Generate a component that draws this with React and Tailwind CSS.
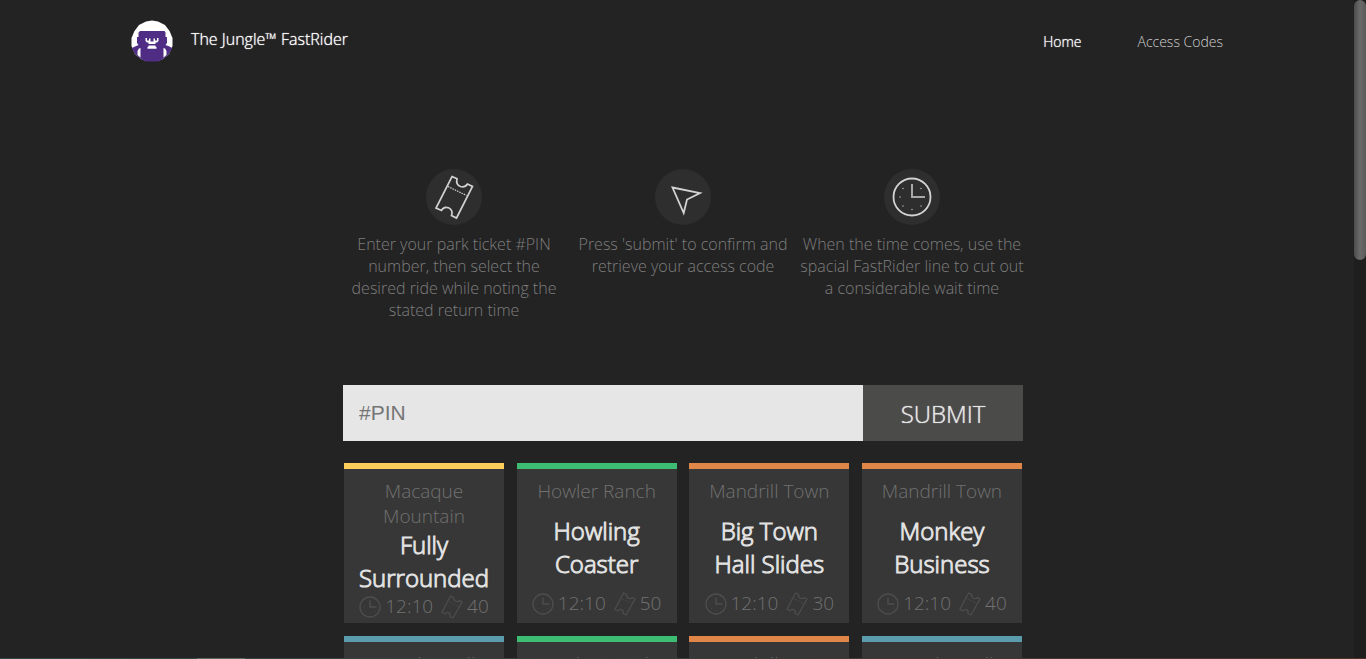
const STEPS = [
  {
    icon: StepTicket,
    text: 'Enter your park ticket #PIN number, then select the desired ride while noting the stated return time',
  },
  {
    icon: StepPointer,
    text: "Press 'submit' to confirm and retrieve your access code",
  },
  {
    icon: StepClock,
    text: 'When the time comes, use the spacial FastRider line to cut out a considerable wait time',
  },
];

const RIDES = [
  { area: 'Macaque Mountain', name: 'Fully Surrounded', time: '12:10', tickets: 40, accent: 'border-[#ffcf5b]' },
  { area: 'Howler Ranch', name: 'Howling Coaster', time: '12:10', tickets: 50, accent: 'border-[#3dbd73]' },
  { area: 'Mandrill Town', name: 'Big Town Hall Slides', time: '12:10', tickets: 30, accent: 'border-[#df8648]' },
  { area: 'Mandrill Town', name: 'Monkey Business', time: '12:10', tickets: 40, accent: 'border-[#df8648]' },
  { area: 'Capuchin Hills', name: 'Treetop Glide', time: '12:10', tickets: 20, accent: 'border-[#5a9cab]' },
  { area: 'Howler Ranch', name: 'Canopy Drop', time: '12:10', tickets: 30, accent: 'border-[#3dbd73]' },
  { area: 'Mandrill Town', name: 'River Rapids', time: '12:10', tickets: 40, accent: 'border-[#df8648]' },
  { area: 'Capuchin Hills', name: 'Vine Express', time: '12:10', tickets: 50, accent: 'border-[#5a9cab]' },
];

function Logo() {
  return (
    <svg viewBox="0 0 42 42" className="size-[42px]" aria-hidden="true">
      <path d="M15 1.500 L21 .5 L27 1.500 L34 5 L38.500 11 L41.500 18 V26 L38 34 L32 39 L27 41 H15 L10 39 L4 34 L.5 26 V18 L3.500 11 L8 5Z" fill="#fff" />
      <path d="M9 11 H33.500 L34.500 12.500 V17 H36 V23 L34.500 25 L38.500 26.500 L41 28 L38 34 L32 39 L27 41.500 H15 L10 39 L4 34 L1 28 L4 26.500 L7.500 25 L6 23 V17 H7.500 V12.500Z" fill="#4f2d85" />
      <path d="M14.500 18 H16 V20.500 H18 V18.500 H19.500 V21.500 H22.500 V18.500 H24 V20.500 H26 V18 H27.500 V21 L26 22.500 H24.500 V24 H17.500 V22.500 H16 L14.500 21Z M17.500 25.500 H24.500 V26.800 H25.500 V28.800 H16.500 V26.800 H17.500Z M8 28.500 L9.500 28 V37.500 L6.500 35 V31Z M34 28.500 L32.500 28 V37.500 L35.500 35 V31Z" fill="#fff" />
    </svg>
  );
}

function StepTicket() {
  return (
    <svg viewBox="0 0 56 56" className="size-14" fill="none" stroke="#d2d2d2" strokeWidth="1.700" aria-hidden="true">
      <path d="M26 7.500 L31 9.800 C30 14 31.500 16.500 34.500 17.500 C37.500 18.400 40 17.300 41.500 15 L46.500 17.500 L30.500 49 L25.500 46.600 C27 43 25.500 40 22.500 38.800 C19.500 37.800 16.700 39 15.500 41.500 L10 39Z" />
      <path d="M22 17.500 L40.500 26.500" strokeDasharray="1.500 1" strokeWidth="1.200" />
    </svg>
  );
}

function StepPointer() {
  return (
    <svg viewBox="0 0 56 56" className="size-14" fill="none" stroke="#d2d2d2" strokeWidth="1.800" aria-hidden="true">
      <path d="M17.500 18.500 L45 24 L32 30.500 L28.700 44Z" />
    </svg>
  );
}

function StepClock() {
  return (
    <svg viewBox="0 0 56 56" className="size-14" fill="none" stroke="#d2d2d2" aria-hidden="true">
      <circle cx="28" cy="28" r="18.500" strokeWidth="1.800" />
      <path d="M28 15 V28 H41" strokeWidth="2" stroke="#a8a8a8" />
      <g fill="#a8a8a8" stroke="none">
        <circle cx="19" cy="19.500" r=".8" />
        <circle cx="37" cy="19.500" r=".8" />
        <circle cx="16" cy="28" r=".8" />
        <circle cx="19" cy="37" r=".8" />
        <circle cx="28" cy="40.500" r=".8" />
        <circle cx="37" cy="37" r=".8" />
      </g>
    </svg>
  );
}

function SmallClock() {
  return (
    <svg viewBox="0 0 22 22" className="size-[22px]" fill="none" stroke="#4d4d4d" strokeWidth="1.400" aria-hidden="true">
      <circle cx="11" cy="11" r="10" />
      <path d="M11 4.500 V11 H17.500" />
      <path d="M4.500 11 h.8 M6 15.500 h.8 M11 17 v.8 M15.500 15.500 h.8" strokeWidth=".8" />
    </svg>
  );
}

function SmallTicket() {
  return (
    <svg viewBox="0 0 22 24" className="h-6 w-[22px]" fill="none" stroke="#4d4d4d" strokeWidth="1.300" aria-hidden="true">
      <path d="M9.500 1 L12.500 2.500 C12.500 5 13.500 6 15 6.500 C16.500 7 17.500 6.500 18.500 5.500 L21 7 L12 23 L9 21.500 C9.500 19.500 9 18.300 7.500 17.600 C6 17 5 17.500 4 19 L1 17.300Z" />
      <path d="M7.500 6.500 L17.500 11.500" strokeDasharray="1 1" strokeWidth=".9" />
    </svg>
  );
}

function RideCard({ ride }) {
  return (
    <li className={`flex h-40 w-40 flex-col justify-between border-t-6 bg-[#373737] px-2.5 pt-2.5 pb-[7px] text-center ${ride.accent}`}>
      <p className="shrink-0 text-[19px] leading-[25px] text-[#717171]">{ride.area}</p>
      <h2 className="-mt-px shrink-0 text-2xl leading-[33px] text-[#e2e2e2] [-webkit-text-stroke:1px_currentColor]">
        {ride.name}
      </h2>
      <div className="flex shrink-0 items-center justify-center gap-1 text-[19px] leading-[25px] text-[#717171]">
        <SmallClock />
        <span>{ride.time}</span>
        <span className="ml-1 flex items-center gap-1">
          <SmallTicket />
          {ride.tickets}
        </span>
      </div>
    </li>
  );
}

export default function App() {
  return (
    <div className="relative h-screen bg-[#232323] font-['Open_Sans',sans-serif] font-light">
      <div className="h-full overflow-y-auto pb-10 [scrollbar-width:none]">
        <header className="mx-auto flex max-w-[1104px] items-center justify-between pt-5">
          <a href="#home" className="flex items-center gap-[18px] text-base text-white">
            <Logo />
            <span className="pb-1 text-shadow-[0_0_1px_currentColor]">The Jungle™ FastRider</span>
          </a>
          <nav className="flex gap-14 pt-0.5 pr-3 text-sm">
            <a href="#home" className="text-white text-shadow-[0_0_1px_currentColor]">Home</a>
            <a href="#codes" className="text-[#d0d0d0]">Access Codes</a>
          </nav>
        </header>

        <main className="pt-[107px]">
          <ul className="mx-auto grid max-w-[687px] grid-cols-3">
            {STEPS.map(({ icon: Icon, text }) => (
              <li key={text} className="flex flex-col items-center">
                <span className="rounded-full bg-[#2e2e2e]">
                  <Icon />
                </span>
                <p className="mt-2 text-center text-base leading-[22px] text-[#7e7e7e]">{text}</p>
              </li>
            ))}
          </ul>

          <form className="mx-auto mt-16 flex h-14 max-w-[680px]" onSubmit={(e) => e.preventDefault()}>
            <input
              type="text"
              aria-label="#PIN"
              placeholder="#PIN"
              className="min-w-0 flex-1 bg-[#e6e6e6] px-4 font-['Liberation_Sans',sans-serif] text-[21px] font-normal text-[#333] outline-none placeholder:text-[#757575]"
            />
            <button type="submit" className="w-40 bg-[#4b4b49] pt-0.5 text-2xl text-[#e6e6e6] text-shadow-[0_0_1px_currentColor]">
              SUBMIT
            </button>
          </form>

          <ul className="mx-auto mt-[22px] flex max-w-[678px] flex-wrap justify-between gap-y-[13px]">
            {RIDES.map((ride, i) => (
              <RideCard key={i} ride={ride} />
            ))}
          </ul>
        </main>
      </div>

      <div className="absolute inset-y-0 right-0 w-3 bg-[#1e1e1e]" aria-hidden="true">
        <div className="h-[260px] rounded-md bg-linear-to-r from-[#4c4c4c] via-[#6a6a6a] to-[#5a5a5a]" />
      </div>
      <div
        className="absolute inset-x-0 bottom-0 h-px bg-linear-to-r from-[#2f4a4a] via-[#3c3a38] to-[#4a3228]"
        aria-hidden="true"
      >
        <div className="ml-[197px] h-px w-12 bg-[#5a6a60]" />
      </div>
    </div>
  );
}
